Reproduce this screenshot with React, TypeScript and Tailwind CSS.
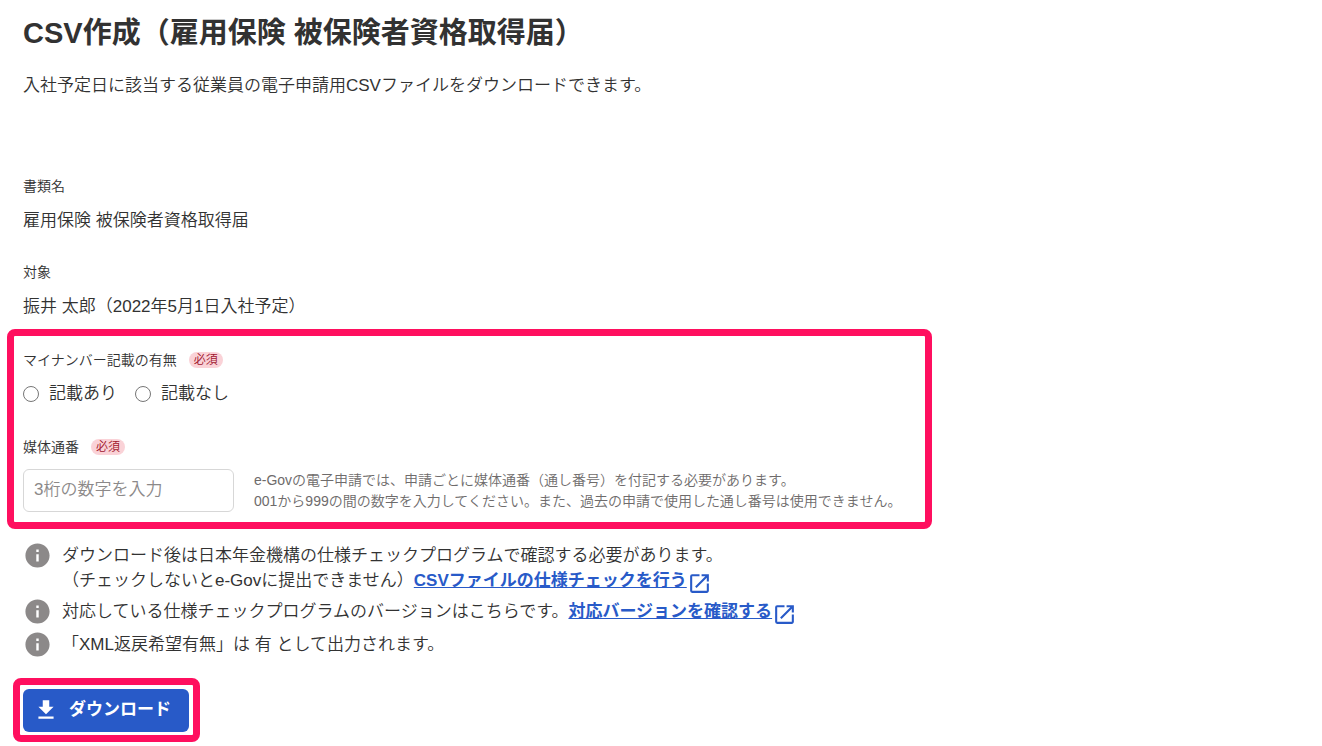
import React from 'react';
import { MdDownload, MdInfo, MdOpenInNew } from 'react-icons/md';

const RequiredBadge: React.FC = () => (
  <span className="rounded-full bg-[#fad2d7] px-[5px] text-xs leading-4 text-[#a0142d]">必須</span>
);

interface FieldProps {
  label: string;
  value: string;
}

const Field: React.FC<FieldProps> = ({ label, value }) => (
  <div>
    <dt className="text-sm leading-5">{label}</dt>
    <dd className="mt-[13px] text-[17px] leading-6">{value}</dd>
  </div>
);

interface ExternalLinkProps {
  children: React.ReactNode;
}

const ExternalLink: React.FC<ExternalLinkProps> = ({ children }) => (
  <a href="#" className="inline-flex h-[25px] items-center font-bold text-[#285ac8]">
    <span className="underline">{children}</span>
    <MdOpenInNew size={25} className="mt-1.5" />
  </a>
);

interface NoteProps {
  children: React.ReactNode;
}

const Note: React.FC<NoteProps> = ({ children }) => (
  <li className="flex items-start gap-2.5">
    <MdInfo size={29} className="shrink-0 text-[#8c8989]" />
    <div className="pt-0.5 text-[17px] leading-[25px]">{children}</div>
  </li>
);

const App: React.FC = () => {
  return (
    <main
      lang="ja"
      className="bg-white pb-1 font-[350] text-[#323232] [font-family:'Liberation_Sans','Noto_Sans_CJK_JP',sans-serif]"
    >
      <header className="px-[23px] pt-[13px]">
        <h1 className="text-[29px] leading-10 font-bold">CSV作成（雇用保険 被保険者資格取得届）</h1>
        <p className="mt-[21px] text-[17px] leading-6">
          入社予定日に該当する従業員の電子申請用CSVファイルをダウンロードできます。
        </p>
      </header>

      <dl className="mt-[78px] flex flex-col gap-[29px] px-[23px]">
        <Field label="書類名" value="雇用保険 被保険者資格取得届" />
        <Field label="対象" value="振井 太郎（2022年5月1日入社予定）" />
      </dl>

      {/* Required inputs */}
      <section className="mt-2.5 ml-[7px] w-fit rounded-lg border-[7px] border-[#ff0f5f] pt-3.5 pr-6 pb-2.5 pl-[9px]">
        <fieldset>
          <legend className="flex items-center gap-3 text-sm leading-5">
            マイナンバー記載の有無
            <RequiredBadge />
          </legend>
          <div className="mt-3 flex gap-[18px] text-[17px] leading-6">
            <label className="flex items-center gap-2.5">
              <input type="radio" name="mynumber" className="size-4" />
              記載あり
            </label>
            <label className="flex items-center gap-2.5">
              <input type="radio" name="mynumber" className="size-4" />
              記載なし
            </label>
          </div>
        </fieldset>

        <div className="mt-[31px]">
          <label htmlFor="serial" className="flex items-center gap-3 text-sm leading-5">
            媒体通番
            <RequiredBadge />
          </label>
          <div className="mt-3 flex items-center gap-5">
            <input
              id="serial"
              type="text"
              placeholder="3桁の数字を入力"
              className="h-[43px] w-[211px] rounded-md border border-[#d7d7d7] px-2.5 pb-0.5 text-[17px] placeholder:text-[#8c8989]"
            />
            <p className="text-sm leading-[21px] text-[#6e6b6b]">
              e-Govの電子申請では、申請ごとに媒体通番（通し番号）を付記する必要があります。
              <br />
              001から999の間の数字を入力してください。また、過去の申請で使用した通し番号は使用できません。
            </p>
          </div>
        </div>
      </section>

      <ul className="mt-3 flex flex-col gap-1 px-[23px]">
        <Note>
          ダウンロード後は日本年金機構の仕様チェックプログラムで確認する必要があります。
          <br />
          （チェックしないとe-Govに提出できません）
          <ExternalLink>CSVファイルの仕様チェックを行う</ExternalLink>
        </Note>
        <Note>
          対応している仕様チェックプログラムのバージョンはこちらです。
          <ExternalLink>対応バージョンを確認する</ExternalLink>
        </Note>
        <Note>「XML返戻希望有無」は 有 として出力されます。</Note>
      </ul>

      {/* Download */}
      <div className="mt-[19px] ml-[13px] w-fit rounded-lg border-[7px] border-[#ff0f5f] pt-1 pr-1 pb-[3px] pl-[3px]">
        <button
          type="button"
          className="flex h-[43px] items-center gap-2.5 rounded-md bg-[#285ac8] pr-[18px] pb-0.5 pl-2.5 text-[17px] font-bold text-white"
        >
          <MdDownload size={26} />
          ダウンロード
        </button>
      </div>
    </main>
  );
};

export default App;
